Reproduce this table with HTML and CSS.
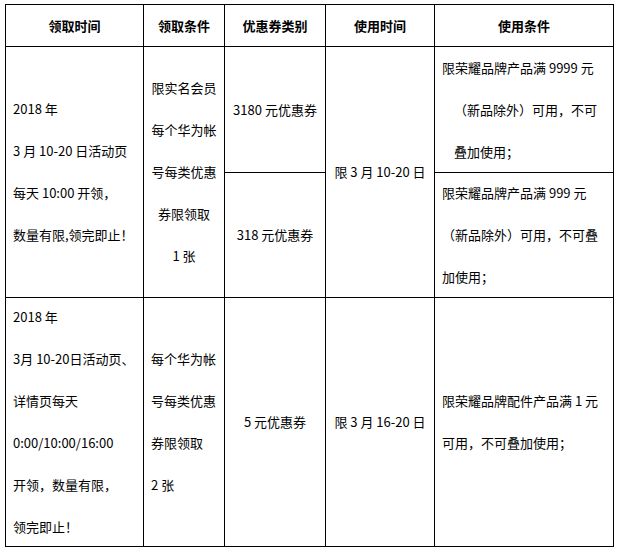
FILE: index.html
```html
<!DOCTYPE html>
<html lang="zh-CN">
<head>
<meta charset="utf-8">
<title>优惠券规则</title>
<link rel="stylesheet" href="styles.css">
</head>
<body>
<div class="page">
  <div class="grid">
    <div class="cell head">领取时间</div>
    <div class="cell head">领取条件</div>
    <div class="cell head">优惠券类别</div>
    <div class="cell head">使用时间</div>
    <div class="cell head">使用条件</div>

    <div class="cell left r1 c1"><div>2018 年<br>3 月 10-20 日活动页<br>每天 10:00 开领，<br>数量有限,领完即止！</div></div>
    <div class="cell center r1 c2"><div>限实名会员<br>每个华为帐<br>号每类优惠<br>券限领取<br>1 张</div></div>
    <div class="cell center r1a c3"><div>3180 元优惠券</div></div>
    <div class="cell center r1 c4"><div>限 3 月 10-20 日</div></div>
    <div class="cell left r1a c5"><div>限荣耀品牌产品满 9999 元<span class="ind">（新品除外）可用，不可</span><span class="ind">叠加使用；</span></div></div>
    <div class="cell center r1b c3"><div>318 元优惠券</div></div>
    <div class="cell left r1b c5"><div>限荣耀品牌产品满 999 元<br>（新品除外）可用，不可叠<br>加使用；</div></div>

    <div class="cell left r2 c1"><div>2018 年<br>3月 10-20日活动页、<br>详情页每天<br>0:00/10:00/16:00<br>开领，数量有限，<br>领完即止！</div></div>
    <div class="cell left r2 c2"><div>每个华为帐<br>号每类优惠<br>券限领取<br>2 张</div></div>
    <div class="cell center r2 c3"><div>5 元优惠券</div></div>
    <div class="cell center r2 c4"><div>限 3 月 16-20 日</div></div>
    <div class="cell left r2 c5"><div>限荣耀品牌配件产品满 1 元<br>可用，不可叠加使用；</div></div>
  </div>
</div>
</body>
</html>
```

FILE: styles.css
```css
html, body {
  margin: 0;
  padding: 0;
  background: #fff;
}

.page {
  padding: 4px 0 0 5px;
}

.grid {
  display: grid;
  grid-template-columns: 137px 80px 100px 108px 178px;
  grid-template-rows: 41px 125px 124px 248px;
  gap: 1px;
  padding: 1px;
  background: #000;
  width: max-content;
  font-family: "Noto Sans CJK SC", "Microsoft YaHei", sans-serif;
  font-size: 13px;
  color: #000;
}

.cell {
  background: #fff;
  display: flex;
  align-items: center;
  white-space: nowrap;
  line-height: 42px;
  padding: 0 7px;
}

.head {
  justify-content: center;
  font-weight: bold;
  line-height: 20px;
}

.center {
  justify-content: center;
  text-align: center;
}

.left {
  justify-content: flex-start;
  text-align: left;
}

.ind {
  display: block;
  padding-left: 12px;
}

.c1 { grid-column: 1; }
.c2 { grid-column: 2; }
.c3 { grid-column: 3; }
.c4 { grid-column: 4; }
.c5 { grid-column: 5; }

.r1 { grid-row: 2 / span 2; }
.r1a { grid-row: 2; }
.r1b { grid-row: 3; }
.r2 { grid-row: 4; }
```
